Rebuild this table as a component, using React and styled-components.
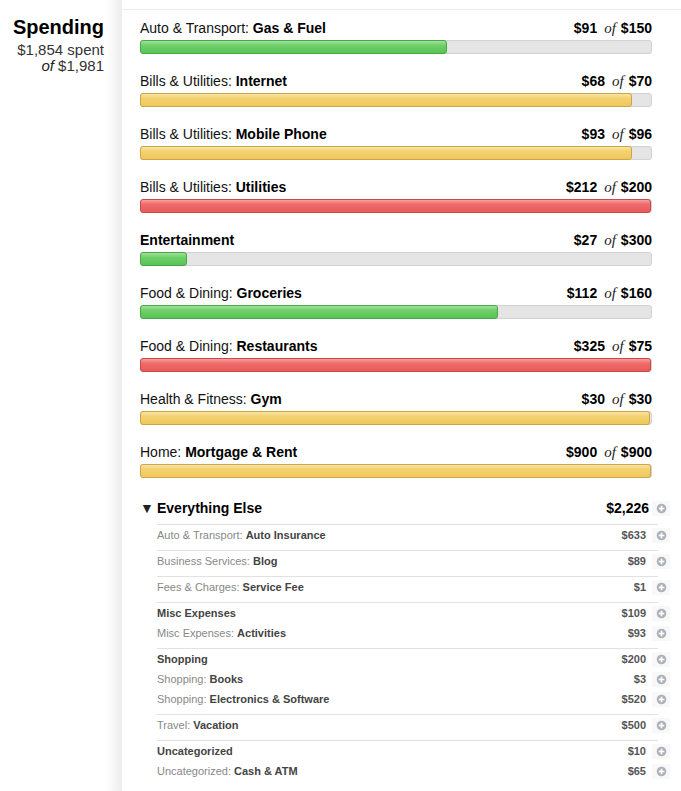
import React from "react";
import styled, { createGlobalStyle } from "styled-components";

const Global = createGlobalStyle`
  html, body { margin: 0; padding: 0; background: #fff; }
  body { font-family: "Liberation Sans", Arial, sans-serif; color: #111; }
`;

const Page = styled.div`
  display: flex;
  width: 681px;
  min-height: 791px;
  overflow: hidden;
`;

const Sidebar = styled.aside`
  width: 122px;
  flex: none;
  box-sizing: border-box;
  padding: 15px 18px 0 0;
  text-align: right;
  background: linear-gradient(to right, #fff 0, #fff 106px, #f6f6f6 114px, #ececec 122px);
`;

const Title = styled.h1`
  margin: 0 0 3px 0;
  font-size: 20px;
  line-height: 24px;
  font-weight: bold;
  color: #000;
`;

const Sub = styled.div`
  font-size: 15px;
  line-height: 16px;
  color: #333;
`;

const SideOf = styled.em`
  font-style: italic;
  color: #222;
`;

const Of = styled.em`
  font-family: "Liberation Serif", "Times New Roman", serif;
  font-style: italic;
  font-size: 15px;
  color: #222;
  margin: 0 5px 0 7px;
`;

const Main = styled.main`
  flex: 1;
  margin-top: 9px;
  border-top: 1px solid #ececec;
  padding: 9px 29px 20px 18px;
  background: #fff;
`;

const Row = styled.div`
  margin-bottom: 18px;
`;

const Label = styled.div`
  display: flex;
  justify-content: space-between;
  align-items: baseline;
  font-size: 14px;
  line-height: 18px;
  height: 18px;
  margin-bottom: 3px;
  color: #111;
`;

const Strong = styled.b`
  font-weight: bold;
  color: #000;
`;

const Track = styled.div`
  height: 14px;
  box-sizing: border-box;
  border: 1px solid #d2d2d2;
  border-radius: 3px;
  background: #e5e5e5;
  display: flex;
`;

const fills = {
  green: { bg: "linear-gradient(#a2e19c 0%, #6fd06a 35%, #58c456 100%)", border: "#48a847" },
  yellow: { bg: "linear-gradient(#f9e4a6 0%, #f3d271 35%, #efc85c 100%)", border: "#cfa544" },
  red: { bg: "linear-gradient(#f7a1a1 0%, #f06b6b 35%, #ea5a5a 100%)", border: "#c84a4a" },
};

const Fill = styled.div`
  height: 14px;
  margin: -1px;
  box-sizing: border-box;
  border: 1px solid ${(p) => fills[p.$c].border};
  border-radius: 3px;
  background: ${(p) => fills[p.$c].bg};
`;

const Else = styled.section``;

const ElseHead = styled.div`
  display: flex;
  align-items: center;
  padding: 3px 0 7px 0;
  height: 18px;
  margin-right: -18px;
  font-size: 14px;
  line-height: 18px;
  font-weight: bold;
  color: #000;
`;

const Caret = styled.span`
  width: 17px;
  font-size: 14px;
  color: #222;
  box-sizing: border-box;
`;

const Grow = styled.span`
  flex: 1;
`;

const Groups = styled.div`
  padding-left: 17px;
  margin-right: -6px;
`;

const Group = styled.div`
  border-top: 1px solid #e2e2e2;
  padding-bottom: 5px;
`;

const SubRow = styled.div`
  display: flex;
  align-items: center;
  height: 20px;
  margin-right: -12px;
  font-size: 11px;
  color: #888;
`;

const SubName = styled.b`
  color: #444;
  font-weight: bold;
`;

const SubAmt = styled.span`
  font-weight: bold;
  color: #555;
`;

const PlusBox = styled.span`
  width: 18px;
  height: 15px;
  margin-left: ${(p) => p.$gap}px;
  display: flex;
  align-items: center;
  justify-content: center;
  background: #f8f8f8;
  flex: none;
`;

const Plus = ({ gap = 6 }) => (
  <PlusBox $gap={gap}>
    <svg width="11" height="11" viewBox="0 0 11 11">
      <circle cx="5.5" cy="5.5" r="4.8" fill="#adb2b9" />
      <rect x="2.7" y="4.7" width="5.6" height="1.6" fill="#fff" />
      <rect x="4.7" y="2.7" width="1.6" height="5.6" fill="#fff" />
    </svg>
  </PlusBox>
);

const budgets = [
  ["Auto & Transport", "Gas & Fuel", 91, 150, 60],
  ["Bills & Utilities", "Internet", 68, 70, 96.3],
  ["Bills & Utilities", "Mobile Phone", 93, 96, 96.3],
  ["Bills & Utilities", "Utilities", 212, 200, 100],
  [null, "Entertainment", 27, 300, 9],
  ["Food & Dining", "Groceries", 112, 160, 70],
  ["Food & Dining", "Restaurants", 325, 75, 100],
  ["Health & Fitness", "Gym", 30, 30, 99.8],
  ["Home", "Mortgage & Rent", 900, 900, 100],
];

const colorFor = (s, b) => (s > b ? "red" : s / b >= 0.9 ? "yellow" : "green");

const groups = [
  [["Auto & Transport", "Auto Insurance", 633]],
  [["Business Services", "Blog", 89]],
  [["Fees & Charges", "Service Fee", 1]],
  [[null, "Misc Expenses", 109], ["Misc Expenses", "Activities", 93]],
  [[null, "Shopping", 200], ["Shopping", "Books", 3], ["Shopping", "Electronics & Software", 520]],
  [["Travel", "Vacation", 500]],
  [[null, "Uncategorized", 10], ["Uncategorized", "Cash & ATM", 65]],
];

export default function App() {
  return (
    <>
      <Global />
      <Page>
        <Sidebar>
          <Title>Spending</Title>
          <Sub>$1,854 spent</Sub>
          <Sub>
            <SideOf>of</SideOf> $1,981
          </Sub>
        </Sidebar>
        <Main>
          {budgets.map(([cat, name, s, b, pct]) => (
            <Row key={name}>
              <Label>
                <span>
                  {cat ? `${cat}: ` : ""}
                  <Strong>{name}</Strong>
                </span>
                <span>
                  <Strong>${s}</Strong>
                  <Of>of</Of>
                  <Strong>${b}</Strong>
                </span>
              </Label>
              <Track>
                <Fill $c={colorFor(s, b)} style={{ width: `calc(${pct}% + 1px)` }} />
              </Track>
            </Row>
          ))}
          <Else>
            <ElseHead>
              <Caret>▼</Caret>
              <Grow>Everything Else</Grow>
              <span>$2,226</span>
              <Plus gap={3} />
            </ElseHead>
            <Groups>
              {groups.map((g, i) => (
                <Group key={i}>
                  {g.map(([cat, name, amt]) => (
                    <SubRow key={name}>
                      <Grow>
                        {cat ? `${cat}: ` : ""}
                        <SubName>{name}</SubName>
                      </Grow>
                      <SubAmt>${amt}</SubAmt>
                      <Plus />
                    </SubRow>
                  ))}
                </Group>
              ))}
            </Groups>
          </Else>
        </Main>
      </Page>
    </>
  );
}
